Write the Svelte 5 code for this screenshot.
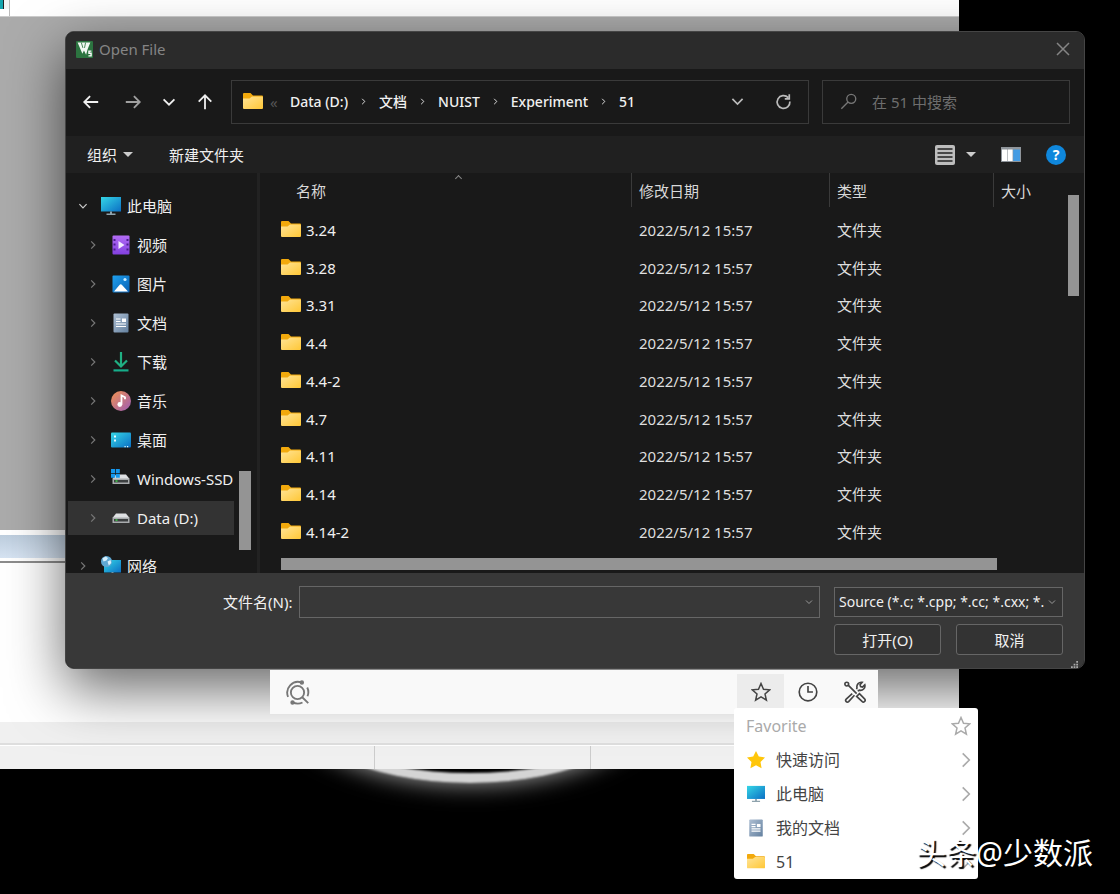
<script lang="ts">
  const crumbs = ['Data (D:)', '文档', 'NUIST', 'Experiment', '51'];

  const tree = [
    { label: '视频', icon: 'video' },
    { label: '图片', icon: 'picture' },
    { label: '文档', icon: 'document' },
    { label: '下载', icon: 'download' },
    { label: '音乐', icon: 'music' },
    { label: '桌面', icon: 'desktop' },
    { label: 'Windows-SSD', icon: 'system' },
    { label: 'Data (D:)', icon: 'drive' }
  ];

  const folders = ['3.24', '3.28', '3.31', '4.4', '4.4-2', '4.7', '4.11', '4.14', '4.14-2'];

  const favorites = [
    { label: '快速访问', icon: 'star' },
    { label: '此电脑', icon: 'computer' },
    { label: '我的文档', icon: 'document' },
    { label: '51', icon: 'folder' }
  ];

  let selected = $state('Data (D:)');
  let fileName = $state('');
</script>

{#snippet icon(name: string)}
  <svg class="icon" viewBox="0 0 20 20" aria-hidden="true">
    {#if name === 'folder'}
      <path d="M0 2a1 1 0 0 1 1-1h6.500l2.500 2.500h9a1 1 0 0 1 1 1V10H0z" fill="#f2a90c" />
      <path d="M0 6.500h6.500l2.500-2H19a1 1 0 0 1 1 1V16a1 1 0 0 1-1 1H1a1 1 0 0 1-1-1z" fill="url(#g-folder)" />
    {:else if name === 'computer'}
      <path d="M0 1h20v14.500H0z" fill="url(#g-screen)" />
      <path d="M9 15.500h2V17.500H9zM5.500 17.500h9v1.500h-9z" fill="#8fa3ad" />
    {:else if name === 'video'}
      <rect x="1.500" y="0.500" width="17" height="19" rx="1" fill="url(#g-video)" />
      <path d="M2.500 4h2v2h-2zm0 4.500h2v2h-2zm0 5h2v2h-2zM15.500 4h2v2h-2zm0 4.500h2v2h-2zm0 5h2v2h-2z" fill="#4a1d8c" />
      <path d="M7.500 6v8l6-4z" fill="#f3eaff" />
    {:else if name === 'picture'}
      <rect x="1.500" y="1.500" width="17" height="17" rx="1" fill="url(#g-picture)" />
      <path d="M3 17.500l5.500-6.500a1.500 1.500 0 0 1 2.500 0l6 6.500z" fill="#fff" />
      <circle cx="14" cy="5.500" r="1.600" fill="#c9ecff" />
    {:else if name === 'document'}
      <rect x="2.500" y="0.500" width="15" height="19" rx="1" fill="url(#g-doc)" />
      <path d="M5 6h4.500M5 8.500h4.500M5 11h10M5 13.500h10" stroke="#fff" stroke-width="1.200" />
      <path d="M11 5.500h4v3.500h-4z" fill="#fff" />
    {:else if name === 'download'}
      <path d="M10 0v14M4 8.500l6 6 6-6" fill="none" stroke="#20b083" stroke-width="2.200" />
      <path d="M2.500 17.300h15v2.200h-15z" fill="#16ad8a" />
    {:else if name === 'music'}
      <circle cx="10" cy="10" r="10" fill="url(#g-music)" />
      <path d="M10.500 13.500V4.500l3.500 1.800v2" fill="none" stroke="#fff" stroke-width="1.800" />
      <circle cx="8.800" cy="13.500" r="2.400" fill="#fff" />
    {:else if name === 'desktop'}
      <rect y="2.500" width="20" height="15" rx="1" fill="url(#g-screen)" />
      <path d="M3 5.500h2v2H3zm0 4h2v2H3zM13.500 16h1.200v1.200h-1.200zm2.500 0h1.200v1.200H16z" fill="#e8fbff" />
    {:else if name === 'system' || name === 'drive'}
      <path d="M5 5.500h10l3.500 4.500h-17z" fill="#dfe1e3" />
      <path d="M1.500 9.500h17v5.500h-17z" fill="#a9acae" />
      <path d="M3 11h14v2.500H3z" fill="#3c3f40" />
      <path d="M4.500 11.300h2v1.500h-2z" fill="#3fd44a" />
      {#if name === 'system'}
        <path d="M0 0h4v4H0zm4.800 0h4v4h-4zM0 4.800h4v4H0zm4.800 0h4v4h-4z" fill="#1597ee" />
      {/if}
    {:else if name === 'network'}
      <path d="M3 4h17v12.500H3z" fill="url(#g-screen)" />
      <path d="M10.500 16.500h2v2h-2z" fill="#c8d4da" />
      <circle cx="5.500" cy="5.500" r="5.500" fill="#5fa8d3" />
      <path d="M1.500 2.500l3-2 2.500 1.500L5.500 4.500l-3 1zM6.500 5.500l3-1.500.800 3-2.500 2.500z" fill="#d6effc" />
    {:else if name === 'star'}
      <path d="M10 0l3.100 6.200 6.900 1-5 4.900 1.200 7.100L10 15.800l-6.200 3.400L5 12.100 0 7.200l6.900-1z" fill="#ffc60a" />
    {/if}
  </svg>
{/snippet}

{#snippet stroke(name: string)}
  <svg class="stroke {name}" viewBox="0 0 20 20" aria-hidden="true">
    {#if name === 'back'}
      <path d="M18 10H3M9 3.500L2.500 10 9 16.500" />
    {:else if name === 'forward'}
      <path d="M2 10H17M11 3.500l6.500 6.500-6.500 6.500" />
    {:else if name === 'up'}
      <path d="M10 18V3M3 9.500L10 2.500l7 7" />
    {:else if name === 'down'}
      <path d="M4 7l6 6 6-6" />
    {:else if name === 'right'}
      <path d="M7 4l6 6-6 6" />
    {:else if name === 'refresh'}
      <path d="M15.500 5.500A7.500 7.500 0 1 0 17.500 10M16.800 1.500V7H11.500" />
    {:else if name === 'search'}
      <circle cx="12.500" cy="6.500" r="5" />
      <path d="M9 10L1.500 17.500" />
    {:else if name === 'close'}
      <path d="M4 4l12 12M16 4L4 16" />
    {:else if name === 'star-line'}
      <path d="M10 1.500l2.500 5.700 6.200.600-4.700 4.100 1.400 6.200L10 14.900l-5.400 3.200L6 11.900 1.300 7.800l6.200-.600z" />
    {:else if name === 'clock'}
      <circle cx="10" cy="10" r="8" />
      <path d="M10 4.500V10h4.500" />
    {:else if name === 'tools'}
      <path d="M7.500 11.500l-5.500 5a1.500 1.500 0 0 0 2.200 2.200L9.500 13M11.500 7.500l.300-1.500a4 4 0 0 1 4.700-4.800L14.600 3.300l.500 1.700 1.700.500 2.100-2.100a4 4 0 0 1-4.900 4.900L12.500 9" />
      <circle cx="2.500" cy="2.800" r="1.700" />
      <path d="M4 4l7.500 7.500M14 11.500l4.700 4.800a1.600 1.600 0 0 1-2.300 2.300L11.500 14z" />
    {:else if name === 'lens'}
      <circle cx="10" cy="10" r="5.300" />
      <path d="M13.800 13.800l4.800 4.700M2.500 13.500a8.600 8.600 0 0 1 10.700-11.500M17.800 6a8.600 8.600 0 0 1 .200 7M6 17.700a8.600 8.600 0 0 0 8 .300" />
      <circle class="dot" cx="13.500" cy="2" r="1" />
      <circle class="dot" cx="6" cy="18" r="1" />
    {/if}
  </svg>
{/snippet}

<svg class="defs" width="0" height="0" aria-hidden="true">
  <defs>
    <linearGradient id="g-folder" x1="0" y1="0" x2="1" y2="1">
      <stop offset="0" stop-color="#ffe497" /><stop offset="1" stop-color="#ffc736" />
    </linearGradient>
    <linearGradient id="g-screen" x1="0" y1="0" x2="1" y2="1">
      <stop offset="0" stop-color="#35d6e6" /><stop offset="1" stop-color="#0b6fc4" />
    </linearGradient>
    <linearGradient id="g-video" x1="0" y1="0" x2="0" y2="1">
      <stop offset="0" stop-color="#b26cf5" /><stop offset="1" stop-color="#8240e0" />
    </linearGradient>
    <linearGradient id="g-picture" x1="0" y1="0" x2="1" y2="1">
      <stop offset="0" stop-color="#1ea0ee" /><stop offset="1" stop-color="#0961b5" />
    </linearGradient>
    <linearGradient id="g-doc" x1="0" y1="0" x2="1" y2="1">
      <stop offset="0" stop-color="#aebfd3" /><stop offset="1" stop-color="#63809f" />
    </linearGradient>
    <linearGradient id="g-music" x1="0" y1="0" x2="1" y2="1">
      <stop offset="0" stop-color="#f39350" /><stop offset="1" stop-color="#9c5bb5" />
    </linearGradient>
  </defs>
</svg>

<main class="screen">
  <div class="ring"></div>

  <div class="editor">
    <div class="editor-toolbar"><i></i></div>
    <div class="workspace"></div>
    <div class="panel-title"></div>
    <div class="output"></div>
    <div class="tabs"></div>
    <div class="status"><span></span><span></span><span></span></div>
  </div>

  <section class="dialog" aria-label="Open File">
    <header class="titlebar">
      <svg class="logo" viewBox="0 0 16 16" aria-hidden="true">
        <rect width="16" height="16" rx="1" fill="#2c7440" />
        <path d="M1.500 1.500h12L11 7.500 9.500 13 7.500 9 6 12z" fill="#f2f7f3" />
        <path d="M5 1.500l1.500 5M9 1.500l-1 5" stroke="#2c7440" stroke-width=".8" />
        <path d="M14.500 9.500h-2.300v2h2v2.500h-2.500" fill="none" stroke="#fff" stroke-width="1.300" />
      </svg>
      <h1>Open File</h1>
      <button class="close-button" aria-label="关闭">{@render stroke('close')}</button>
    </header>

    <nav class="navbar">
      <div class="history">
        <button aria-label="后退">{@render stroke('back')}</button>
        <button class="dim" aria-label="前进">{@render stroke('forward')}</button>
        <button aria-label="最近">{@render stroke('down')}</button>
        <button aria-label="向上">{@render stroke('up')}</button>
      </div>
      <div class="address">
        {@render icon('folder')}
        <span class="more">«</span>
        <ol>
          {#each crumbs as crumb, i}
            <li>
              {#if i > 0}{@render stroke('right')}{/if}
              <button>{crumb}</button>
            </li>
          {/each}
        </ol>
        <button class="address-drop" aria-label="展开">{@render stroke('down')}</button>
        <button class="refresh-button" aria-label="刷新">{@render stroke('refresh')}</button>
      </div>
      <label class="search-box">
        {@render stroke('search')}
        <input type="text" placeholder="在 51 中搜索" aria-label="搜索" />
      </label>
    </nav>

    <div class="commands">
      <button class="organize">组织 <i class="triangle"></i></button>
      <button>新建文件夹</button>
      <div class="views">
        <button aria-label="视图">
          <svg width="20" height="20" viewBox="0 0 20 20">
            <rect width="20" height="20" rx="2" fill="#bdbdbd" />
            <path d="M2.500 4h15M2.500 8h15M2.500 12h15M2.500 16h15" stroke="#222" stroke-width="1.300" />
          </svg>
          <i class="triangle"></i>
        </button>
        <button aria-label="预览窗格">
          <svg width="20" height="15" viewBox="0 0 20 15">
            <path d="M0 0h20v15H0z" fill="#8f959b" />
            <path d="M1 2.500h5V14H1zm5.600 0h5V14h-5z" fill="#fff" />
            <path d="M12.200 2.500H19V14h-6.800z" fill="#459ce3" />
          </svg>
        </button>
        <button class="help" aria-label="帮助">?</button>
      </div>
    </div>

    <div class="browser">
      <aside>
        <ul>
          <li>
            <button class="node root">{@render stroke('down')}{@render icon('computer')}此电脑</button>
          </li>
          {#each tree as node}
            <li>
              <button
                class="node"
                class:selected={selected === node.label}
                onclick={() => (selected = node.label)}
              >
                {@render stroke('right')}{@render icon(node.icon)}{node.label}
              </button>
            </li>
          {/each}
          <li class="network">
            <button class="node root">{@render stroke('right')}{@render icon('network')}网络</button>
          </li>
        </ul>
        <div class="tree-thumb"></div>
      </aside>

      <div class="files">
        <div class="listing">
          <table>
            <thead>
              <tr>
                <th class="name"><span>名称</span><i class="sort"></i></th>
                <th class="date"><span>修改日期</span></th>
                <th class="type"><span>类型</span></th>
                <th class="size"><span>大小</span></th>
              </tr>
            </thead>
            <tbody>
              {#each folders as folder}
                <tr>
                  <td><div class="file">{@render icon('folder')}{folder}</div></td>
                  <td>2022/5/12 15:57</td>
                  <td>文件夹</td>
                  <td></td>
                </tr>
              {/each}
            </tbody>
          </table>
          <div class="list-thumb-x"></div>
        </div>
        <div class="list-thumb-y"></div>
      </div>
    </div>

    <footer>
      <label class="file-label" for="file-name">文件名(N):</label>
      <div class="combo">
        <input id="file-name" type="text" bind:value={fileName} />
        {@render stroke('down')}
      </div>
      <div class="choices">
        <div class="filter">
          <select aria-label="文件类型">
            <option>Source (*.c; *.cpp; *.cc; *.cxx; *.</option>
          </select>
          {@render stroke('down')}
        </div>
        <button>打开(O)</button>
        <button>取消</button>
      </div>
    </footer>
    <svg class="grip" viewBox="0 0 8 8" aria-hidden="true">
      <path d="M6 0h2v2H6zM3 3h2v2H3zm3 0h2v2H6zM0 6h2v2H0zm3 0h2v2H3zm3 0h2v2H6z" />
    </svg>
  </section>

  <div class="quickbar">
    {@render stroke('lens')}
    <div class="quick-actions">
      <button class="active" aria-label="Favorite">{@render stroke('star-line')}</button>
      <button aria-label="History">{@render stroke('clock')}</button>
      <button aria-label="Tools">{@render stroke('tools')}</button>
    </div>
  </div>

  <div class="menu">
    <div class="menu-head">Favorite {@render stroke('star-line')}</div>
    {#each favorites as item}
      <button>{@render icon(item.icon)}<span>{item.label}</span>{@render stroke('right')}</button>
    {/each}
  </div>

  <div class="watermark">头条@少数派</div>
</main>

<style>
  :global(body) {
    margin: 0;
    background: #000;
  }

  .screen {
    position: relative;
    min-height: 100vh;
    overflow: hidden;
    background: #000;
    color: #f0f0f0;
    font: 15px/20px 'Noto Sans', 'Noto Sans CJK SC', sans-serif;
  }

  .screen * {
    box-sizing: border-box;
  }

  .defs {
    position: absolute;
  }

  button,
  input,
  select {
    margin: 0;
    padding: 0;
    border: 0;
    background: none;
    color: inherit;
    font: inherit;
    white-space: nowrap;
  }

  button {
    display: flex;
    align-items: center;
    cursor: pointer;
  }

  ul,
  ol {
    margin: 0;
    padding: 0;
    list-style: none;
  }

  .icon {
    flex: none;
    width: 20px;
    height: 20px;
  }

  .stroke {
    flex: none;
    width: 20px;
    height: 20px;
    fill: none;
    stroke: currentColor;
    stroke-width: 2;
  }

  /* windows on the desktop */
  .ring {
    position: absolute;
    left: 280px;
    top: 600px;
    width: 380px;
    height: 183px;
    border-bottom: 10px solid #d4d4d4;
    border-radius: 50%;
    box-shadow: 0 0 24px #aaa;
    filter: blur(1px);
  }

  .editor {
    position: absolute;
    top: 0;
    left: 0;
    right: 161px;
    background: #f0f0f0;
  }

  .editor-toolbar {
    height: 17px;
    background: #fff;
    border-bottom: 1px solid #ccc;
  }

  .editor-toolbar i {
    display: block;
    width: 10px;
    height: 16px;
    border-right: 1px solid #bbb;
    background: linear-gradient(90deg, #16a5ae 3px, #222 3px, #222 4px, #f4f4f4 4px) 0 0 / 100% 9px no-repeat;
  }

  .workspace {
    height: 513px;
    background: #ababab;
  }

  .panel-title {
    height: 31px;
    border: solid #fff;
    border-width: 5px 0 3px;
    background: linear-gradient(#bdcddd, #d6e3f2);
  }

  .output {
    height: 161px;
    border-top: 2px solid #8c8c8c;
    background: #fff;
  }

  .tabs {
    height: 23px;
    border-bottom: 2px solid #dedede;
  }

  .status {
    display: grid;
    grid-template-columns: 375fr 216fr 368fr;
    height: 24px;
    border-top: 1px solid #fff;
  }

  .status span {
    border-right: 1px solid #ccc;
  }

  .dialog {
    position: absolute;
    top: 31px;
    left: 65px;
    right: 35px;
    border: 1px solid #454545;
    border-radius: 9px;
    background: #191919;
    box-shadow: 0 20px 56px rgba(0, 0, 0, 0.6);
  }

  .titlebar {
    display: flex;
    align-items: center;
    height: 37px;
    padding: 0 11px 3px 10px;
    border-radius: 8px 8px 0 0;
    background: #2b2b2b;
    color: #858585;
  }

  .logo {
    width: 17px;
    height: 17px;
    margin-right: 6px;
  }

  h1 {
    flex: 1;
    margin: 0;
    font-size: 15px;
    font-weight: 400;
  }

  .close-button .stroke {
    stroke-width: 1.5;
  }

  .navbar {
    display: flex;
    align-items: center;
    height: 67px;
    padding: 0 14px 2px 13px;
  }

  .history {
    display: flex;
    align-items: center;
    justify-content: space-between;
    width: 135px;
    margin-right: 17px;
    padding-left: 3px;
  }

  .history .stroke {
    width: 18px;
    height: 18px;
  }

  .history .dim {
    margin-left: 6px;
    color: #a0a0a0;
  }

  .address,
  .search-box {
    display: flex;
    align-items: center;
    height: 44px;
    border: 1px solid #3a3a3a;
  }

  .address {
    flex: 1;
    padding: 0 16px 0 11px;
  }

  .address ol {
    display: flex;
    flex: 1;
    font-size: 14px;
    font-weight: 500;
  }

  .address li {
    display: flex;
    align-items: center;
  }

  .address li .stroke {
    width: 9px;
    height: 9px;
    margin: 0 11px;
  }

  .more {
    width: 27px;
    padding-left: 7px;
    color: #555;
  }

  .address-drop {
    margin-right: 29px;
  }

  .address-drop .stroke,
  .refresh-button .stroke {
    width: 17px;
    height: 17px;
    color: #bbb;
  }

  .search-box {
    width: 248px;
    margin-left: 13px;
    padding-left: 17px;
    color: #777;
  }

  .search-box .stroke {
    width: 18px;
    height: 18px;
    stroke-width: 1.5;
  }

  .search-box input {
    flex: 1;
    min-width: 0;
    margin-left: 14px;
    outline: none;
  }

  .search-box input::placeholder {
    color: #6e6e6e;
    opacity: 1;
  }

  .commands {
    display: flex;
    align-items: center;
    height: 37px;
    padding: 0 18px 0 21px;
    background: #202020;
  }

  .organize {
    margin-right: 36px;
  }

  .triangle {
    width: 0;
    margin-left: 6px;
    border: solid transparent;
    border-width: 5px 5px 0;
    border-top-color: #ccc;
  }

  .views {
    display: flex;
    align-items: center;
    gap: 25px;
    margin-left: auto;
  }

  .views .triangle {
    margin-left: 11px;
  }

  .help {
    justify-content: center;
    width: 20px;
    height: 20px;
    border-radius: 50%;
    background: #0f87dc;
    color: #fff;
    font-size: 14px;
    font-weight: 700;
  }

  .browser {
    display: flex;
    height: 400px;
    overflow: hidden;
  }

  aside {
    display: flex;
    width: 194px;
    padding: 13px 6px 0 2px;
    border-right: 3px solid #222;
  }

  aside ul {
    flex: 1;
  }

  aside li {
    display: flex;
    align-items: center;
    height: 39px;
  }

  .node {
    width: 100%;
    height: 34px;
    padding-left: 19px;
  }

  .node.root {
    padding-left: 9px;
  }

  .node.selected {
    background: #333;
  }

  .node .stroke {
    width: 12px;
    height: 12px;
    margin-right: 12px;
    color: #777;
  }

  .node .down {
    color: #ccc;
  }

  .node .icon {
    margin-right: 6px;
  }

  .network {
    margin-top: 9px;
  }

  .tree-thumb {
    width: 12px;
    height: 79px;
    margin: 285px 0 0 5px;
    background: #949494;
  }

  .files {
    display: flex;
    flex: 1;
    padding: 0 5px 0 21px;
  }

  .listing {
    flex: 1;
  }

  table {
    width: 100%;
    height: 378px;
    table-layout: fixed;
    border-collapse: collapse;
  }

  th,
  td {
    padding: 0;
    text-align: left;
    font-weight: 400;
  }

  th {
    position: relative;
    height: 38px;
    vertical-align: top;
    color: #d8d8d8;
  }

  th span {
    display: block;
    height: 34px;
    padding-left: 7px;
    border-left: 1px solid #3a3a3a;
    line-height: 36px;
  }

  th.name span {
    padding-left: 15px;
    border: 0;
  }

  .sort {
    position: absolute;
    top: 3px;
    left: 50%;
    width: 5px;
    height: 5px;
    border: solid #888;
    border-width: 1px 0 0 1px;
    transform: rotate(45deg);
  }

  .date {
    width: 198px;
  }

  .type {
    width: 164px;
  }

  .size {
    width: 75px;
  }

  td {
    padding-left: 8px;
    color: #dedede;
  }

  td:first-child {
    padding-left: 0;
    color: #f0f0f0;
  }

  .file {
    display: flex;
    align-items: center;
    gap: 5px;
  }

  .list-thumb-x {
    width: 91%;
    height: 12px;
    margin-top: 7px;
    background: #949494;
  }

  .list-thumb-y {
    width: 11px;
    height: 101px;
    margin-top: 22px;
    background: #949494;
  }

  footer {
    display: flex;
    height: 95px;
    padding: 13px 21px 0 157px;
    border-radius: 0 0 8px 8px;
    background: #383838;
  }

  .file-label {
    margin-right: 7px;
    line-height: 32px;
  }

  .combo,
  .filter {
    display: flex;
    align-items: center;
    border: 1px solid #666;
  }

  .combo {
    flex: 1;
    height: 32px;
    margin-right: 14px;
  }

  .combo input {
    flex: 1;
    min-width: 0;
    padding: 0 6px;
    outline: none;
  }

  .combo .stroke,
  .filter .stroke {
    width: 10px;
    height: 10px;
    margin-right: 5px;
    color: #999;
  }

  .choices {
    display: grid;
    grid-template-columns: 107px 107px;
    gap: 7px 15px;
    align-content: start;
  }

  .filter {
    grid-column: span 2;
    height: 30px;
    margin-top: 1px;
    background: #333;
    font-size: 14px;
  }

  .filter select {
    flex: 1;
    min-width: 0;
    height: 28px;
    padding-left: 4px;
    appearance: none;
    outline: none;
  }

  .choices button {
    justify-content: center;
    height: 31px;
    border: 1px solid #666;
    border-radius: 3px;
    background: #333;
  }

  .grip {
    position: absolute;
    right: 6px;
    bottom: 0;
    width: 7px;
    height: 7px;
    fill: #aaa;
  }

  .quickbar {
    position: absolute;
    top: 670px;
    left: 270px;
    right: 242px;
    display: flex;
    align-items: center;
    justify-content: space-between;
    height: 44px;
    padding-left: 15px;
    background: #f9f9f9;
    color: #444;
  }

  .quickbar .stroke {
    width: 22px;
    height: 22px;
    stroke-width: 1.5;
  }

  .quickbar .lens {
    width: 25px;
    height: 25px;
    color: #777;
  }

  .dot {
    fill: currentColor;
  }

  .quick-actions {
    display: flex;
  }

  .quick-actions button {
    justify-content: center;
    width: 47px;
    height: 36px;
  }

  .quick-actions .active {
    background: #ececec;
  }

  .quick-actions .star-line {
    width: 20px;
    height: 20px;
  }

  .menu {
    position: absolute;
    top: 708px;
    right: 142px;
    width: 244px;
    border-radius: 3px;
    background: #fff;
    color: #444;
    font-size: 16px;
  }

  .menu-head {
    display: flex;
    align-items: center;
    justify-content: space-between;
    height: 35px;
    padding: 0 7px 0 12px;
    color: #aaa;
  }

  .menu button {
    width: 100%;
    height: 34px;
    padding: 0 1px 0 13px;
  }

  .menu span {
    flex: 1;
    margin-left: 11px;
    text-align: left;
  }

  .menu .icon {
    width: 18px;
    height: 18px;
  }

  .menu .stroke {
    color: #aaa;
    stroke-width: 1.5;
  }

  .menu .right {
    width: 22px;
    height: 22px;
  }

  .watermark {
    position: absolute;
    right: 27px;
    bottom: 21px;
    color: #fff;
    font: 30px/40px 'Noto Sans', 'Noto Sans CJK SC', sans-serif;
    text-shadow: 2px 2px 1px #000;
  }
</style>
